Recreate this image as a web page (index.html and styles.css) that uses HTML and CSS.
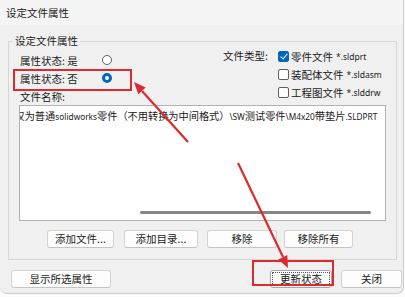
FILE: index.html
```html
<!DOCTYPE html>
<html lang="zh-CN">
<head>
    <meta charset="UTF-8">
    <meta name="viewport" content="width=device-width, initial-scale=1.0">
    <title>设定文件属性</title>
    <link rel="stylesheet" href="styles.css">
</head>
<body>
    <div class="window">
        <div class="titlebar">设定文件属性</div>

        <fieldset class="group">
            <legend>设定文件属性</legend>
            <div class="top">
                <div class="states">
                    <div class="state-row"><span class="state-label">属性状态: 是</span><span class="radio"></span></div>
                    <div class="state-row"><span class="state-label">属性状态: 否</span><span class="radio checked"></span></div>
                    <div class="files-label">文件名称:</div>
                </div>
                <div class="types">
                    <span class="types-label">文件类型:</span>
                    <div class="type-list">
                        <div class="type"><span class="check checked"></span>零件文件 <span class="ext">*.sldprt</span></div>
                        <div class="type"><span class="check"></span>装配体文件 <span class="ext">*.sldasm</span></div>
                        <div class="type"><span class="check"></span>工程图文件 <span class="ext">*.slddrw</span></div>
                    </div>
                </div>
            </div>

            <div class="listbox">
                <div class="list-item">仅为普通<span class="lat">solidworks</span>零件（不用转换为中间格式）<span class="lat">\SW</span>测试零件<span class="lat">\M4x20</span>带垫片<span class="lat">.SLDPRT</span></div>
                <div class="hscroll"><div class="thumb"></div></div>
            </div>

            <div class="list-buttons">
                <button class="btn btn-addfile">添加文件...</button>
                <button class="btn btn-adddir">添加目录...</button>
                <button class="btn btn-remove">移除</button>
                <button class="btn btn-removeall">移除所有</button>
            </div>
        </fieldset>

        <div class="footer">
            <button class="btn btn-show">显示所选属性</button>
            <button class="btn btn-update">更新状态</button>
            <button class="btn btn-close">关闭</button>
        </div>

        <!-- annotations drawn over the dialog -->
        <div class="mark mark-state"></div>
        <div class="mark mark-update"></div>
        <svg class="arrows" width="405" height="297" viewBox="0 0 405 297">
            <line x1="188" y1="142" x2="142" y2="91" stroke="#dc2b2f" stroke-width="2.2"/>
            <polygon points="134,82 145.7,87.6 138.3,94.2" fill="#dc2b2f"/>
            <line x1="238" y1="163" x2="283" y2="257" stroke="#dc2b2f" stroke-width="2.2"/>
            <polygon points="288,268 287.3,255.1 278.3,259.4" fill="#dc2b2f"/>
        </svg>
    </div>
</body>
</html>
```

FILE: styles.css
```css
* {
    box-sizing: border-box;
}
body {
    margin: 0;
    background: #fbfbfb;
    font-family: "Noto Sans CJK SC", "Noto Sans", sans-serif;
    font-size: 10.5px;
    color: #1a1a1a;
}
.window {
    position: relative;
    width: 404px;
    height: 294px;
    background: #f0f0f0;
    border-right: 1px solid #cdcdcd;
    border-bottom: 1px solid #cdcdcd;
    border-radius: 0 0 7px 7px;
    overflow: hidden;
}
.titlebar {
    height: 25px;
    line-height: 25px;
    padding-left: 6px;
    background: #f4f4f4;
    font-size: 10.5px;
}
.group {
    margin: 8px 0 0 8px;
    width: 389px;
    padding: 0 0 11px 10px;
    border: 1px solid #d5d5d5;
}
.group legend {
    padding: 0 2px;
    margin-left: -6px;
    line-height: 16px;
}
.top {
    display: grid;
    grid-template-columns: 204px 1fr;
}
.states {
    padding-top: 2px;
}
.state-row {
    display: flex;
    align-items: center;
    height: 18px;
    padding-left: 1px;
}
.state-label {
    width: 82px;
}
.radio {
    width: 10px;
    height: 10px;
    border: 1px solid #5f5f5f;
    border-radius: 50%;
    background: #fff;
}
.radio.checked {
    border: 3px solid #0067c0;
    background: #fff;
}
.files-label {
    margin-top: 2px;
    height: 16px;
    line-height: 16px;
    padding-left: 1px;
}
.types {
    display: flex;
    margin-top: -2px;
}
.types-label {
    width: 55px;
    height: 18px;
    line-height: 18px;
}
.type {
    display: flex;
    align-items: center;
    height: 18px;
    white-space: nowrap;
}
.check {
    width: 11px;
    height: 11px;
    margin-right: 2px;
    border: 1px solid #5f5f5f;
    border-radius: 2px;
    background: #fff;
}
.check.checked {
    position: relative;
    border-color: #0067c0;
    background: #0067c0;
}
.check.checked::after {
    content: "";
    position: absolute;
    left: 3px;
    top: 0px;
    width: 3px;
    height: 6px;
    border-right: 1.3px solid #fff;
    border-bottom: 1.3px solid #fff;
    transform: rotate(40deg);
}
.ext {
    margin-left: 3px;
    font-family: "Noto Sans", sans-serif;
    font-size: 8.5px;
}
.listbox {
    display: flex;
    flex-direction: column;
    width: 367px;
    height: 116px;
    border: 1px solid #b2b2b2;
    background: #fff;
    overflow: hidden;
}
.list-item {
    padding-top: 2px;
    font-size: 10.2px;
    line-height: 16px;
    white-space: nowrap;
    text-indent: -5.5px;
}
.lat {
    font-family: "Noto Sans", sans-serif;
    font-size: 8.3px;
}
.hscroll {
    margin-top: auto;
    height: 14px;
    padding-top: 5px;
}
.thumb {
    margin-left: 120px;
    width: 231px;
    height: 3px;
    border-radius: 2px;
    background: #858585;
}
.list-buttons {
    display: flex;
    margin-top: 9px;
    padding-left: 28px;
}
.btn {
    height: 18px;
    padding: 0;
    font-family: inherit;
    font-size: 10.5px;
    line-height: 16px;
    color: #1a1a1a;
    background: #fdfdfd;
    border: 1px solid #d3d3d3;
    border-bottom-color: #c4c4c4;
    border-radius: 3px;
}
.btn-addfile {
    width: 67px;
}
.btn-adddir {
    width: 74px;
    margin-left: 10px;
}
.btn-remove {
    width: 70px;
    margin-left: 9px;
}
.btn-removeall {
    width: 69px;
    margin-left: 7px;
}
.footer {
    display: flex;
    margin-top: 10px;
    padding: 0 1px 0 11px;
}
.btn-show {
    width: 100px;
}
.btn-update {
    width: 62px;
    margin-left: auto;
    border-color: #a7a7a7;
    outline: 1px dotted #555;
    outline-offset: -3px;
}
.btn-close {
    width: 61px;
    margin-left: 9px;
}
.mark {
    position: absolute;
    border: 2px solid #dc2b2f;
}
.mark-state {
    left: 13px;
    top: 69px;
    width: 119px;
    height: 22px;
}
.mark-update {
    left: 252px;
    top: 260px;
    width: 82px;
    height: 26px;
}
.arrows {
    position: absolute;
    left: 0;
    top: 0;
    pointer-events: none;
}
```
